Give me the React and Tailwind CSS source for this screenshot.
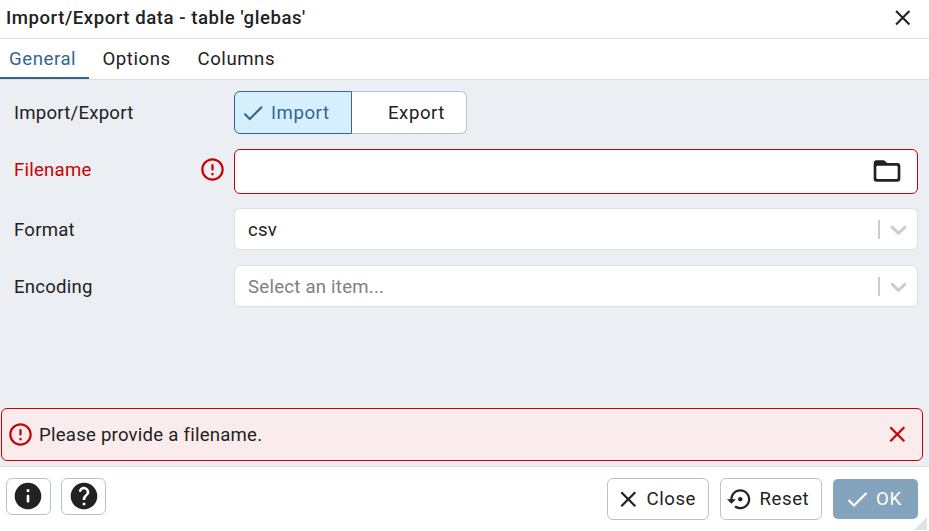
import React from 'react';

const PATHS = {
  check: 'M9 16.17 4.83 12l-1.42 1.41L9 19 21 7l-1.41-1.41z',
  close: 'M19 6.41 17.59 5 12 10.59 6.41 5 5 6.41 10.59 12 5 17.59 6.41 19 12 13.41 17.59 19 19 17.59 13.41 12z',
  error: 'M12 7c.55 0 1 .45 1 1v4c0 .55-.45 1-1 1s-1-.45-1-1V8c0-.55.45-1 1-1m-.01-5C6.47 2 2 6.48 2 12s4.47 10 9.99 10C17.52 22 22 17.52 22 12S17.52 2 11.99 2M12 20c-4.42 0-8-3.58-8-8s3.58-8 8-8 8 3.58 8 8-3.58 8-8 8m1-3h-2v-2h2z',
  info: 'M12 2C6.48 2 2 6.48 2 12s4.48 10 10 10 10-4.48 10-10S17.52 2 12 2m0 15c-.55 0-1-.45-1-1v-4c0-.55.45-1 1-1s1 .45 1 1v4c0 .55-.45 1-1 1m1-8h-2V7h2z',
  help: 'M12 2C6.48 2 2 6.48 2 12s4.48 10 10 10 10-4.48 10-10S17.52 2 12 2m1 17h-2v-2h2zm2.07-7.75-.9.92c-.5.51-.86.97-1.04 1.69-.08.32-.13.68-.13 1.14h-2v-.5c0-.46.08-.9.22-1.31.2-.58.53-1.1.95-1.52l1.24-1.26c.46-.44.68-1.1.55-1.8-.13-.72-.69-1.33-1.39-1.53-1.11-.31-2.14.32-2.47 1.27-.12.37-.43.65-.82.65h-.3C8.4 9 8 8.44 8.16 7.88c.43-1.47 1.68-2.59 3.23-2.83 1.52-.24 2.97.55 3.87 1.8 1.18 1.63.83 3.38-.19 4.4',
  folder: 'M20 6h-8l-1.41-1.41C10.21 4.21 9.7 4 9.17 4H4c-1.1 0-1.99.9-1.99 2L2 18c0 1.1.9 2 2 2h16c1.1 0 2-.9 2-2V8c0-1.1-.9-2-2-2m-1 12H5c-.55 0-1-.45-1-1V9c0-.55.45-1 1-1h14c.55 0 1 .45 1 1v8c0 .55-.45 1-1 1',
  reset: 'M14 12c0-1.1-.9-2-2-2s-2 .9-2 2 .9 2 2 2 2-.9 2-2m-2-9c-4.97 0-9 4.03-9 9H0l4 4 4-4H5c0-3.87 3.13-7 7-7s7 3.13 7 7-3.13 7-7 7c-1.51 0-2.91-.49-4.06-1.3l-1.42 1.44C8.04 20.3 9.94 21 12 21c4.97 0 9-4.03 9-9s-4.03-9-9-9',
};

function Icon({ name, className }) {
  return (
    <svg viewBox="0 0 24 24" fill="currentColor" className={'shrink-0 ' + className}>
      <path d={PATHS[name]} />
    </svg>
  );
}

function Row({ label, error, className, labelClass = '', children }) {
  return (
    <div className={'flex items-center pl-[14px] pr-[11px] ' + className}>
      <div className={'flex w-[220px] items-center justify-between pr-[8.5px] ' + (error ? 'text-[#cc0000]' : '')}>
        <span className={labelClass}>{label}</span>
        {error && <Icon name="error" className="mb-[4px] size-[27px]" />}
      </div>
      {children}
    </div>
  );
}

function Select({ value, placeholder }) {
  return (
    <div className="flex h-[42px] flex-1 items-center rounded-[6px] border border-[#dde0e6] bg-white pl-[13px] pr-[5px]">
      <span className={'flex-1 pt-[2px] tracking-[0.24px] ' + (value ? '' : 'text-[#808080]')}>{value || placeholder}</span>
      <span className="mr-[5px] h-[19px] w-[2px] bg-[#cccccc]" />
      <svg viewBox="0 0 20 20" className="size-[27px] fill-[#cccccc]">
        <path d="M4.516 7.548c0.436-0.446 1.043-0.481 1.576 0l3.908 3.747 3.908-3.747c0.533-0.481 1.141-0.446 1.574 0 0.436 0.445 0.408 1.197 0 1.615-0.406 0.418-4.695 4.502-4.695 4.502-0.217 0.223-0.502 0.335-0.787 0.335s-0.57-0.112-0.789-0.335c0 0-4.287-4.084-4.695-4.502s-0.436-1.17 0-1.615z" />
      </svg>
    </div>
  );
}

const outlined = 'flex items-center rounded-[6px] border border-[#bac1cd] bg-white';

export default function App() {
  return (
    <div className="flex h-[531px] w-[929px] flex-col overflow-hidden bg-white font-['Roboto',sans-serif] text-[18.6px] leading-[28px] tracking-[0.22px] text-[#222222]">
      <header className="flex h-[39px] items-center justify-between border-b border-[#dde0e6] pl-[6px] pr-[13.5px] pb-[3px]">
        <h1 className="text-[18.6px] font-medium tracking-[0.54px]">Import/Export data - table 'glebas'</h1>
        <Icon name="close" className="size-[25.5px]" />
      </header>

      <nav className="flex h-[41px] border-b border-[#dde0e6] tracking-[0.56px]">
        <div className="flex h-[40px] w-[89px] items-center border-b-2 border-[#326690] pl-[9px] pt-[2px] text-[#326690]">General</div>
        <div className="flex h-[40px] w-[95px] items-center pl-[13.5px]">Options</div>
        <div className="flex h-[40px] items-center pl-[13.5px]">Columns</div>
      </nav>

      <main className="flex h-[386px] flex-col bg-[#ebeef3] pt-[11px]">
        <Row label="Import/Export" className="h-[43px]">
          <div className="flex h-[43px] tracking-[0.55px]">
            <div className="flex w-[118px] items-center rounded-l-[6px] border border-[#326690] bg-[#d6effc] pl-[5px] text-[#326690]">
              <Icon name="check" className="mr-[5px] size-[26px]" />
              Import
            </div>
            <div className="flex w-[115px] items-center rounded-r-[6px] border border-l-0 border-[#bac1cd] bg-white pl-[36px]">Export</div>
          </div>
        </Row>
        <Row label="Filename" error labelClass="pb-[4px]" className="mt-[15px] h-[45px]">
          <div className="flex h-[45px] flex-1 items-center justify-end rounded-[6px] border border-[#cc0000] bg-white pr-[14px]">
            <Icon name="folder" className="mb-[2px] size-[32px]" />
          </div>
        </Row>
        <Row label="Format" labelClass="pt-[2px]" className="mt-[14px] h-[42px]"><Select value="csv" /></Row>
        <Row label="Encoding" labelClass="pt-[2px]" className="mt-[15px] h-[42px]"><Select placeholder="Select an item..." /></Row>

        <div className="mt-auto mb-[5px] ml-[1px] mr-[6px] flex h-[53px] items-center rounded-[6px] border border-[#cc0000] bg-[#faecec] pl-[4.5px] pr-[11px]">
          <Icon name="error" className="size-[27px] text-[#cc0000]" />
          <span className="ml-[5.5px] flex-1 tracking-[0.23px]">Please provide a filename.</span>
          <Icon name="close" className="size-[26.6px] text-[#cc0000]" />
        </div>
      </main>

      <footer className="relative flex h-[65px] items-start border-t border-[#dde0e6] pl-[6px] pr-[11px] pt-[11px]">
        <div className={outlined + ' mr-[10px] h-[37px] w-[45px] pl-[5px] pb-px'}><Icon name="info" className="size-[32px]" /></div>
        <div className={outlined + ' h-[37px] w-[45px] pl-[6px] pb-px'}><Icon name="help" className="size-[32px]" /></div>
        <div className="ml-auto flex items-center gap-[11px] tracking-[0.55px]">
          <div className={outlined + ' h-[42px] w-[102px] pl-[7px]'}><Icon name="close" className="mr-[5px] size-[26.6px]" />Close</div>
          <div className={outlined + ' h-[42px] w-[102px] pl-[6px]'}><Icon name="reset" className="mr-[6px] size-[26.6px]" />Reset</div>
          <div className="flex h-[40px] w-[85px] items-center rounded-[5px] bg-[#84a3bc] pl-[11px] text-white"><Icon name="check" className="mr-[5.5px] size-[26.6px]" />OK</div>
        </div>
        <svg className="absolute bottom-0 right-0 h-[14px] w-[15px]" viewBox="0 0 15 14"><path d="M0 13 13 0V13Z" fill="#e2e2e2" /></svg>
      </footer>
    </div>
  );
}
